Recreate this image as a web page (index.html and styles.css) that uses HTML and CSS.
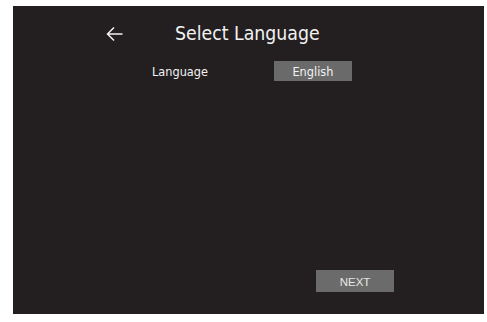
FILE: index.html
```html
<html>
<head>
<link rel="stylesheet" href="styles.css">
</head>
<body>
    <div class="screen">
        <div class="header">
            <svg class="back" width="17" height="16" viewBox="0 0 17 16">
                <path d="M16.5 8 H1.5 M8 1.5 L1.5 8 L8 14.5" fill="none" stroke="#f2f2f2" stroke-width="1.5"/>
            </svg>
            <h1 class="title">Select Language</h1>
        </div>

        <div class="row">
            <span class="label">Language</span>
            <button class="choice">English</button>
        </div>

        <button class="next">NEXT</button>
    </div>
</body>
</html>
```

FILE: styles.css
```css
html, body
{
    margin: 0;
    padding: 0;
    background: #fff;
}

body
{
    padding: 6px 3px 8px 13px;
}

.screen
{
    display: flex;
    flex-direction: column;
    width: 471px;
    height: 308px;
    box-sizing: border-box;
    padding: 17px 0 22px 0;
    background: #231f20;
    color: #f2f2f2;
    font-family: "DejaVu Sans", Verdana, sans-serif;
    font-stretch: condensed;
}

.header
{
    display: flex;
    align-items: center;
    gap: 52px;
    padding-left: 93px;
    height: 22px;
}

.back
{
    display: block;
}

.title
{
    margin: 0;
    font-size: 19.3px;
    font-weight: normal;
    line-height: 22px;
}

.row
{
    display: flex;
    align-items: center;
    gap: 66px;
    margin-top: 16px;
    padding-left: 139px;
}

.label
{
    font-size: 12.6px;
}

.choice
{
    width: 78px;
    height: 20px;
    border: none;
    padding: 0;
    background: #6a6a6a;
    color: #f2f2f2;
    font-family: inherit;
    font-stretch: condensed;
    font-size: 12.6px;
}

.next
{
    align-self: flex-start;
    margin: auto 0 0 303px;
    width: 78px;
    height: 22px;
    border: none;
    padding: 2px 0 0 0;
    background: #6b6b6b;
    color: #e6e6e6;
    font-family: "Liberation Sans", Arial, sans-serif;
    font-size: 11.5px;
}
```
